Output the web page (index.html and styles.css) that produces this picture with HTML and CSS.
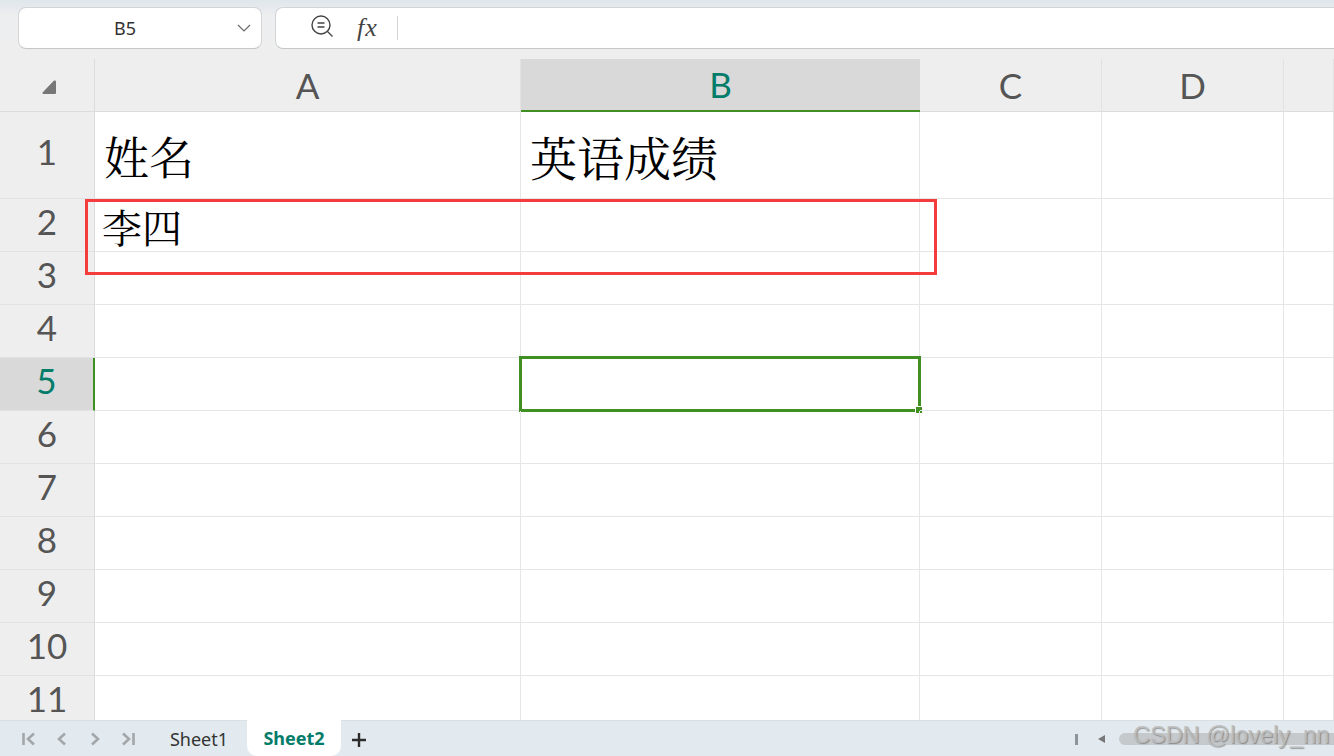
FILE: index.html
```html
<!DOCTYPE html>
<html lang="zh">
<head>
<meta charset="utf-8">
<title>Sheet</title>
<link rel="stylesheet" href="styles.css">
</head>
<body>
<div class="app">
  <div class="formula-bar">
    <div class="name-box">
      <span class="name-label">B5</span>
      <svg class="chevron" width="14" height="8" viewBox="0 0 14 8"><path d="M1 1l6 6 6-6" fill="none" stroke="#6a6a6a" stroke-width="1.2"/></svg>
    </div>
    <div class="formula-box">
      <svg class="zoom-icon" width="24" height="24" viewBox="0 0 24 24"><circle cx="11" cy="10" r="9" fill="none" stroke="#444" stroke-width="1.4"/><path d="M17.5 16.5l5 5M7.5 8h7M7.5 12h7" fill="none" stroke="#444" stroke-width="1.4"/></svg>
      <span class="fx">fx</span>
      <span class="separator"></span>
    </div>
  </div>
  <div class="sheet">
    <div class="corner"><svg width="16" height="16" viewBox="0 0 16 16"><path d="M14 1.5a1 1 0 0 1 1 1V14a1 1 0 0 1-1 1H2.500a1 1 0 0 1-.7-1.700L12.800 1.800a1 1 0 0 1 1.200-.3z" fill="#777"/></svg></div>
    <div class="col-head">A</div><div class="col-head col-active">B</div><div class="col-head">C</div><div class="col-head">D</div><div class="col-head"></div>

    <div class="row-head">1</div><div class="cell big"><span class="big-a">姓名</span></div><div class="cell big"><span class="big-b">英语成绩</span></div><div class="cell"></div><div class="cell"></div><div class="cell"></div>
    <div class="row-head">2</div><div class="cell mid"><span>李四</span></div><div class="cell"></div><div class="cell"></div><div class="cell"></div><div class="cell"></div>
    <div class="row-head">3</div><div class="cell"></div><div class="cell"></div><div class="cell"></div><div class="cell"></div><div class="cell"></div>
    <div class="row-head">4</div><div class="cell"></div><div class="cell"></div><div class="cell"></div><div class="cell"></div><div class="cell"></div>
    <div class="row-head row-active">5</div><div class="cell"></div><div class="cell selected"><span class="handle"></span></div><div class="cell"></div><div class="cell"></div><div class="cell"></div>
    <div class="row-head">6</div><div class="cell"></div><div class="cell"></div><div class="cell"></div><div class="cell"></div><div class="cell"></div>
    <div class="row-head">7</div><div class="cell"></div><div class="cell"></div><div class="cell"></div><div class="cell"></div><div class="cell"></div>
    <div class="row-head">8</div><div class="cell"></div><div class="cell"></div><div class="cell"></div><div class="cell"></div><div class="cell"></div>
    <div class="row-head">9</div><div class="cell"></div><div class="cell"></div><div class="cell"></div><div class="cell"></div><div class="cell"></div>
    <div class="row-head">10</div><div class="cell"></div><div class="cell"></div><div class="cell"></div><div class="cell"></div><div class="cell"></div>
    <div class="row-head">11</div><div class="cell"></div><div class="cell"></div><div class="cell"></div><div class="cell"></div><div class="cell"></div>
    <div class="annotation"></div>
  </div>
  <div class="tab-bar">
    <div class="tab-nav">
      <svg width="16" height="16" viewBox="0 0 16 16"><path d="M2.500 2v12M13 2.500L7 8l6 5.500" fill="none" stroke="#a3a7aa" stroke-width="2.600"/></svg>
      <svg width="16" height="16" viewBox="0 0 16 16"><path d="M11 2.500L5 8l6 5.500" fill="none" stroke="#a3a7aa" stroke-width="2.600"/></svg>
      <svg width="16" height="16" viewBox="0 0 16 16"><path d="M5 2.500L11 8l-6 5.500" fill="none" stroke="#a3a7aa" stroke-width="2.600"/></svg>
      <svg width="16" height="16" viewBox="0 0 16 16"><path d="M13.500 2v12M3 2.500L9 8l-6 5.500" fill="none" stroke="#a3a7aa" stroke-width="2.600"/></svg>
    </div>
    <div class="tab tab-plain">Sheet1</div>
    <div class="tab tab-active">Sheet2</div>
    <svg class="add-tab" width="16" height="16" viewBox="0 0 16 16"><path d="M8 1v14M1 8h14" stroke="#2c2c2c" stroke-width="2.400"/></svg>
    <div class="scroll-area">
      <span class="scroll-split"></span>
      <span class="scroll-left"></span>
      <span class="scroll-thumb"></span>
    </div>
    <div class="watermark">CSDN @lovely_nn</div>
  </div>
</div>
</body>
</html>
```
FILE: styles.css
```css
* { box-sizing: border-box; }
html, body { margin: 0; padding: 0; }
body { width: 1334px; height: 756px; overflow: hidden; background: #fff; }
.app { position: relative; width: 1334px; height: 756px; display: flex; flex-direction: column; overflow: hidden; }

.formula-bar {
  height: 59px; flex: none; display: flex; gap: 13px; padding: 7px 0 0 18px;
  background: linear-gradient(#dfe7ec 0, #edeef0 16px, #eeeeee 100%);
  overflow: hidden;
}
.name-box, .formula-box {
  height: 42px; background: #fff; border: 1px solid #d2d4d6; border-bottom-color: #c4c6c8; border-radius: 8px;
  display: flex; align-items: center;
}
.name-box { width: 244px; flex: none; padding-right: 10px; }
.name-label { flex: 1; text-align: center; padding-right: 6px; font: 18px "Noto Sans", sans-serif; color: #333; }
.formula-box { flex: none; width: 1100px; padding-left: 34px; }
.zoom-icon { margin-top: -2px; }
.fx { margin-left: 23px; width: 40px; font: italic 26px "Liberation Serif", serif; color: #444; letter-spacing: 1px; }
.separator { width: 1px; height: 24px; background: #d4d4d4; }

.sheet {
  position: relative; flex: 1; min-height: 0; overflow: hidden; display: grid;
  grid-template-columns: 95px 426px 399px 182px 182px 1fr;
  grid-template-rows: 53px 87px repeat(10, 53px);
  background: #fff;
}
.corner { background: #eeeeee; border-right: 1px solid #dcdcdc; border-bottom: 1px solid #dcdcdc; padding: 20px 0 0 41px; }
.corner svg { display: block; }
.col-head, .row-head {
  display: flex; align-items: center; justify-content: center; background: #eeeeee; color: #555;
  font: 35px Lato, sans-serif;
}
.col-head { border-right: 1px solid #e2e2e2; border-bottom: 1px solid #dcdcdc; padding-bottom: 1px; }
.row-head { border-right: 1px solid #dcdcdc; border-bottom: 1px solid #e2e2e2; padding-bottom: 8px; }
.col-active { background: #d9d9d9; color: #047c6a; border-right: 0; border-bottom: 2px solid #3f8f23; }
.row-active { background: #d9d9d9; color: #047c6a; border-right: 2px solid #3f8f23; }
.cell { position: relative; border-right: 1px solid #e6e6e6; border-bottom: 1px solid #e6e6e6; font-family: "Noto Serif CJK SC", "Noto Sans CJK SC", serif; color: #000; display: flex; align-items: center; white-space: nowrap; }
.big { font-size: 45px; }
.big-a { margin-left: 9px; }
.big-b { margin-left: 9px; font-size: 47px; }
.mid { font-size: 40px; padding-left: 7px; }
.selected::before {
  content: ""; position: absolute; left: -2px; top: -2px; right: -2px; bottom: -2px;
  border: 3px solid #3f8f23;
}
.handle {
  position: absolute; right: -4px; bottom: -4px; width: 8px; height: 8px;
  background: #3f8f23; border: 1px solid #fff;
}
.annotation { position: absolute; left: 85px; top: 140px; width: 852px; height: 76px; border: 3px solid #f53c3c; }

.tab-bar {
  position: relative; height: 36px; flex: none; display: flex; align-items: flex-start;
  background: #e2eaef; border-top: 1px solid #dadfe2;
}
.tab-nav { width: 147px; flex: none; display: flex; gap: 17px; padding: 10px 0 0 21px; }
.tab { width: 100px; height: 35px; flex: none; display: flex; align-items: center; justify-content: center; font: 18px "Noto Sans", sans-serif; color: #333; }
.tab-plain { padding-left: 4px; }
.tab-active { width: 94px; margin-top: -1px; height: 36px; background: #fff; color: #047c6a; font-weight: 700; border-radius: 0 0 10px 10px; }
.add-tab { flex: none; margin: 11px 0 0 10px; }
.scroll-area { position: absolute; left: 1075px; right: 0; top: 12px; display: flex; align-items: center; height: 12px; }
.scroll-split { width: 3px; height: 11px; background: #8f9498; }
.scroll-left { margin-left: 20px; width: 0; height: 0; border: 4px solid transparent; border-left-width: 0; border-right: 7px solid #777; }
.scroll-thumb { margin-left: 14px; flex: 1; height: 12px; background: #c5c9cc; border-radius: 6px 0 0 6px; }
.watermark {
  position: absolute; left: 1133px; top: 0; white-space: nowrap;
  font: 23.5px/28px "Liberation Sans", sans-serif; color: rgba(190,190,190,.9);
  text-shadow: 1px 1px 1px rgba(90,90,90,.55);
}
```
